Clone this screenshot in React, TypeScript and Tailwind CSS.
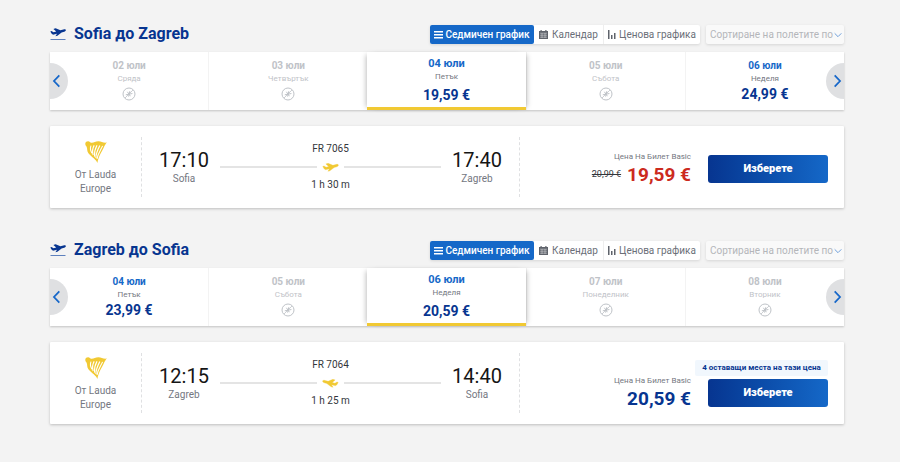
import React from 'react';

type Day = { date: string; day: string; price?: string };

type Trip = {
  id: string;
  from: string;
  to: string;
  selected: number;
  days: Day[];
  depart: string;
  arrive: string;
  flight: string;
  duration: string;
  price: string;
  oldPrice?: string;
  seats?: string;
  back?: boolean;
};

const trips: Trip[] = [
  {
    id: 'out',
    from: 'Sofia',
    to: 'Zagreb',
    selected: 2,
    days: [
      { date: '02 юли', day: 'Сряда' },
      { date: '03 юли', day: 'Четвъртък' },
      { date: '04 юли', day: 'Петък', price: '19,59 €' },
      { date: '05 юли', day: 'Събота' },
      { date: '06 юли', day: 'Неделя', price: '24,99 €' },
    ],
    depart: '17:10',
    arrive: '17:40',
    flight: 'FR 7065',
    duration: '1 h 30 m',
    price: '19,59 €',
    oldPrice: '20,99 €',
  },
  {
    id: 'back',
    from: 'Zagreb',
    to: 'Sofia',
    selected: 2,
    days: [
      { date: '04 юли', day: 'Петък', price: '23,99 €' },
      { date: '05 юли', day: 'Събота' },
      { date: '06 юли', day: 'Неделя', price: '20,59 €' },
      { date: '07 юли', day: 'Понеделник' },
      { date: '08 юли', day: 'Вторник' },
    ],
    depart: '12:15',
    arrive: '14:40',
    flight: 'FR 7064',
    duration: '1 h 25 m',
    price: '20,59 €',
    seats: '4 оставащи места на тази цена',
    back: true,
  },
];

const planePath =
  'M.3 3.4 1.5 3 3.6 4.2 6.2 3.5 3.4.9 5.6.3 10.4 2.3 13.4 1.5C14.8 1.1 15.8 1.4 15.9 2.1 16 2.9 15.1 3.5 14.2 3.8L11.6 4.6 7.4 7.8 5.4 8.3 7 5.8 4 6.6C2.8 6.8 2 6.4 1.5 5.6Z';

function TakeoffIcon() {
  return (
    <svg viewBox="0 0 16 13" className="h-[13px] w-4 shrink-0" aria-hidden="true">
      <path d={planePath} fill="#073590" />
      <path d="M.5 11h15v1H.5z" fill="#5d80bd" />
    </svg>
  );
}

function PlaneIcon({ back }: { back?: boolean }) {
  return (
    <svg viewBox="0 0 16 9" className={`h-[9px] w-[17px] shrink-0 ${back ? '-scale-x-100' : ''}`} aria-hidden="true">
      <path d={planePath} fill="#f1c933" stroke="#f1c933" strokeWidth=".3" />
    </svg>
  );
}

function NoFlightIcon() {
  return (
    <svg viewBox="0 0 14 14" className="mt-[2px] size-[14px]" fill="none" stroke="#bfc3c8" aria-hidden="true">
      <circle cx="7" cy="7" r="6" strokeWidth="1" />
      <path d="M3 11 11 3" strokeWidth=".8" />
      <path d="M3.8 7.8 10.4 6.5M5.4 4.8 8.4 9.2M7.8 4.2 6.6 9.6" strokeWidth="1" />
    </svg>
  );
}

function HarpIcon() {
  return (
    <svg viewBox="0 0 22 22" className="size-[22px]" fill="none" aria-hidden="true">
      <path
        d="M.3 2.4C.5 1 1.8.2 3.2.3 4.8.4 5 1.6 6.3 1.8 8.6 2.1 10.5.2 13.5.3 16.5.4 18 2.1 21.8 1.6 20.6 3.2 19.8 4.2 19 6 17.8 9.5 13.8 14 12.4 21.9 11.4 18.6 6.6 16 3.6 12.5 1.6 10 2.6 7.6 1.6 5.7 1.1 4.7.1 4 .3 2.4Z"
        fill="#f1c933"
      />
      <path
        d="M6 4.6C4.8 7.4 5.4 9.6 7 12.2M9.2 4.4C7.4 7.4 7.2 10.6 8.1 14M12 4.2C10.2 7.5 9.1 11.2 9.6 15.6M14.8 4.6C12.8 8.4 10.9 12 10.9 17M17.6 4.9C15.9 8.8 12.9 12.6 12 18"
        stroke="#fff"
        strokeWidth="1.1"
      />
    </svg>
  );
}

function Chevron({ className, d }: { className: string; d: string }) {
  return (
    <svg viewBox="0 0 12 12" className={className} fill="none" stroke="#1667c9" aria-hidden="true">
      <path d={d} strokeWidth="1.5" />
    </svg>
  );
}

function Toolbar({ id }: { id: string }) {
  return (
    <div className="flex items-center gap-[6px] text-[10px]">
      <div className="flex h-[19px] rounded-[2px] bg-white text-[#6b6f78] shadow-[0_1px_3px_rgba(0,0,0,0.12)]">
        <button className="flex w-[104px] items-center justify-center gap-[2px] rounded-[2px] bg-[#1568c8] font-medium whitespace-nowrap text-white">
          <svg viewBox="0 0 9 9" className="size-[9px]" fill="#fff" aria-hidden="true">
            <path d="M0 1h9v1.5H0zM0 4h9v1.5H0zM0 7h9v1.5H0z" />
          </svg>
          Седмичен график
        </button>
        <button className="flex w-[69px] items-center justify-center gap-1 whitespace-nowrap">
          <svg viewBox="0 0 9 9" className="size-[9px]" aria-hidden="true">
            <path d="M0 1h1.5V0h1.2v1h3.6V0h1.2v1H9v8H0z" fill="#5f636b" />
            <path d="M1 3.2h7M1 5.2h7M1 7.2h7M3 3v5M6 3v5" stroke="#fff" strokeWidth=".4" />
          </svg>
          Календар
        </button>
        <button className="flex w-[97px] items-center justify-center gap-[3px] border-l border-[#eeeeee] whitespace-nowrap">
          <svg viewBox="0 0 8 9" className="h-[9px] w-2" fill="#5f636b" aria-hidden="true">
            <path d="M0 0h1.5v9H0zM3 5h1.5v4H3zM6 3h1.5v6H6z" />
          </svg>
          Ценова графика
        </button>
      </div>
      <div className="relative">
        <select
          id={`sort-${id}`}
          aria-label="Сортиране на полетите по"
          className="block h-[19px] w-[138px] appearance-none rounded-[2px] bg-[#f9f9f9] pl-1 text-[10px] text-[#b4b6ba] shadow-[0_1px_3px_rgba(0,0,0,0.12)]"
        >
          <option>Сортиране на полетите по</option>
        </select>
        <Chevron className="pointer-events-none absolute top-[6px] right-[2px] size-2 opacity-60" d="M1 3.5 6 8.5 11 3.5" />
      </div>
    </div>
  );
}

function DayCell({ item, selected }: { item: Day; selected: boolean }) {
  const off = !item.price;
  return (
    <button
      className={
        selected
          ? 'relative flex min-w-0 flex-1 flex-col items-center border-b-3 border-[#f1c933] bg-white pt-[5px] shadow-[4px_0_5px_-3px_rgba(0,0,0,0.25),-4px_0_5px_-3px_rgba(0,0,0,0.25)]'
          : 'flex min-w-0 flex-1 flex-col items-center border-l border-[#f3f3f3] pt-[7px] first:border-l-0'
      }
    >
      <span
        className={`leading-[14px] font-bold ${selected ? 'text-[11px]' : 'text-[10px]'} ${off ? 'text-[#bfc3c8]' : 'text-[#1568c8]'}`}
      >
        {item.date}
      </span>
      <span className={`text-[8px] leading-3 ${off ? 'text-[#bfc3c8]' : 'text-[#74777f]'}`}>{item.day}</span>
      {off ? (
        <NoFlightIcon />
      ) : (
        <span className={`text-[14px] font-bold text-[#073590] ${selected ? 'mt-[2px] leading-5' : 'leading-[18px]'}`}>
          {item.price}
        </span>
      )}
    </button>
  );
}

function Endpoint({ time, city }: { time: string; city: string }) {
  return (
    <div className="flex w-[54px] flex-col items-center">
      <span className="text-[20px] leading-6 text-[#151515]">{time}</span>
      <span className="text-[10px] leading-[14px] text-[#74777f]">{city}</span>
    </div>
  );
}

function TripSection({ trip }: { trip: Trip }) {
  return (
    <section>
      <header className="flex h-6 items-center justify-between">
        <h2 className="flex items-center gap-2 text-[16px] leading-5 font-bold text-[#073590]">
          <TakeoffIcon />
          {trip.from} до {trip.to}
        </h2>
        <Toolbar id={trip.id} />
      </header>

      <div className="relative mt-[6px] flex h-[58px] bg-white shadow-[0_1px_2px_rgba(0,0,0,0.2)]">
        {trip.days.map((item, i) => (
          <DayCell key={item.date} item={item} selected={i === trip.selected} />
        ))}
        <button
          aria-label="Предишни дни"
          className="absolute top-[11px] left-0 flex h-9 w-[18px] items-center rounded-r-full bg-[#dfe0e2]"
        >
          <Chevron className="size-[14px]" d="M8 1.2 3.4 6 8 10.8" />
        </button>
        <button
          aria-label="Следващи дни"
          className="absolute top-[11px] right-0 flex h-9 w-[18px] items-center justify-end rounded-l-full bg-[#dfe0e2]"
        >
          <Chevron className="size-[14px]" d="M4 1.2 8.6 6 4 10.8" />
        </button>
      </div>

      <article className="mt-4 flex h-[82px] items-stretch rounded-[1px] bg-white py-[11px] shadow-[0_1px_3px_rgba(0,0,0,0.22)]">
        <div className="flex w-[92px] flex-col items-center border-r border-dashed border-[#dfe0e2] pt-1 text-center">
          <HarpIcon />
          <span className="mt-[5px] w-12 text-[10px] leading-[14px] text-[#74777f]">От Lauda Europe</span>
        </div>

        <div className="flex flex-1 items-start border-r border-dashed border-[#dfe0e2] px-[15px]">
          <div className="pt-[11px]">
            <Endpoint time={trip.depart} city={trip.from} />
          </div>
          <div className="flex flex-1 flex-col items-center px-[9px] pt-1 text-[10px] leading-4 text-[#33363b]">
            <span>{trip.flight}</span>
            <div className="my-[3px] flex h-[14px] w-full items-center gap-[5px]">
              <span className="h-[2px] flex-1 bg-[#e4e4e4]" />
              <PlaneIcon back={trip.back} />
              <span className="h-[2px] flex-1 bg-[#e4e4e4]" />
            </div>
            <span>{trip.duration}</span>
          </div>
          <div className="pt-[11px]">
            <Endpoint time={trip.arrive} city={trip.to} />
          </div>
        </div>

        <div className="flex w-[324px] justify-end gap-[17px] pr-4">
          <div className={`flex flex-col items-end ${trip.seats ? 'pt-[22px]' : 'pt-[14px]'}`}>
            <span className="text-[8px] leading-3 text-[#74777f]">Цена На Билет Basic</span>
            <div className="flex items-center gap-[6px]">
              {trip.oldPrice && <s className="text-[9px] text-[#33363b]">{trip.oldPrice}</s>}
              <strong className={`text-[19px] leading-6 font-bold ${trip.oldPrice ? 'text-[#cc2b1e]' : 'text-[#073590]'}`}>
                {trip.price}
              </strong>
            </div>
          </div>
          <div className={`relative w-[120px] ${trip.seats ? 'pt-[26px]' : 'pt-[18px]'}`}>
            {trip.seats && (
              <span className="absolute top-[7px] right-0 flex h-4 w-[133px] items-center justify-center rounded-[2px] bg-[#f1f7fd] text-[8px] font-bold whitespace-nowrap text-[#073590]">
                {trip.seats}
              </span>
            )}
            <button className="h-7 w-full rounded-[3px] bg-linear-to-r from-[#073590] to-[#1568c8] text-[11px] font-black text-white">
              Изберете
            </button>
          </div>
        </div>
      </article>
    </section>
  );
}

export default function App() {
  return (
    <main className="min-h-screen bg-[#f3f3f3] pt-[22px] pr-14 pb-9 pl-[50px] font-[Roboto,'Noto_Sans',sans-serif]">
      <div className="flex flex-col gap-[30px]">
        {trips.map((trip) => (
          <TripSection key={trip.id} trip={trip} />
        ))}
      </div>
    </main>
  );
}
